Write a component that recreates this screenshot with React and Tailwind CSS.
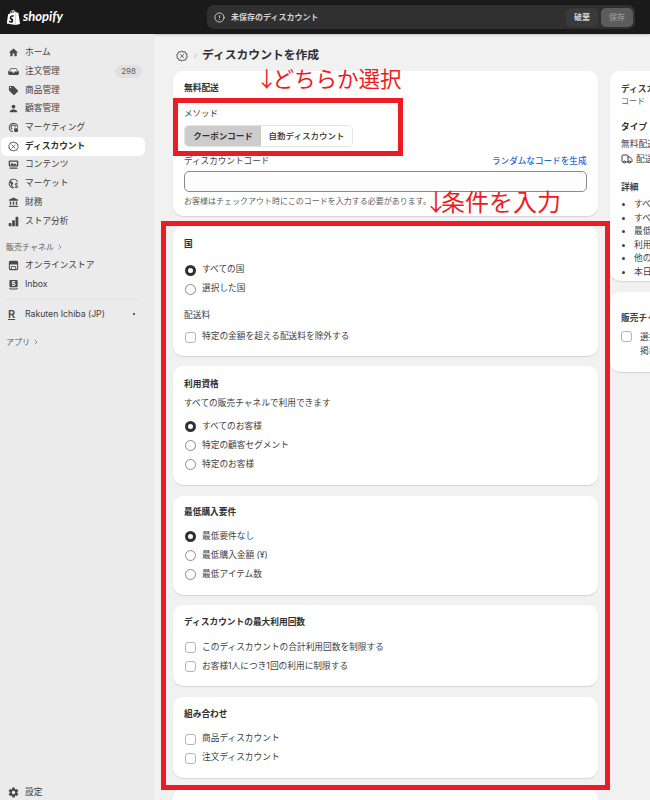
import React from 'react';
import { SiShopify } from 'react-icons/si';
import { MdHome, MdLocalOffer, MdPerson, MdAccountBalance } from 'react-icons/md';
import { BsInboxFill, BsBarChartFill } from 'react-icons/bs';
import { IoSettingsSharp } from 'react-icons/io5';
import { LuTruck, LuChevronRight, LuCircleAlert } from 'react-icons/lu';

function DiscountIcon({ className }) {
  return (
    <svg viewBox="0 0 16 16" className={className} fill="none" stroke="currentColor" strokeWidth="1.4">
      <path d="M8 1.500l1.800 1.100 2.100-.1 1 1.900 1.700 1.100-.4 2.100.7 2-1.500 1.500-.5 2.100-2.100.2L8 14.500l-1.800-1.100-2.100.1-1-1.900-1.700-1.100.4-2.100-.7-2 1.500-1.500.5-2.100 2.100-.2z" strokeLinejoin="round" />
      <path d="M5.500 5.500l5 5M10.500 5.500l-5 5" strokeWidth="1.200" />
    </svg>
  );
}

function MarketingIcon({ className }) {
  return (
    <svg viewBox="0 0 16 16" className={className} fill="none" stroke="currentColor" strokeWidth="1.500">
      <path d="M7 14a6 6 0 1 1 7-6" />
      <path d="M6.500 10.500a3.200 3.200 0 1 1 4.300-3" />
      <rect x="9" y="9" width="5.500" height="5.500" rx="1" fill="currentColor" stroke="none" />
    </svg>
  );
}

function ContentIcon({ className }) {
  return (
    <svg viewBox="0 0 16 16" className={className} fill="currentColor">
      <path fillRule="evenodd" d="M2.500 2h11A1.500 1.500 0 0 1 15 3.500v6a1.500 1.500 0 0 1-1.500 1.500h-11A1.500 1.500 0 0 1 1 9.500v-6A1.500 1.500 0 0 1 2.500 2zm.5 2v5h10V4H3z" />
      <path d="M4 8l2-2.500 2 2 2-1 2 1.500V9H4z" />
      <rect x="2" y="12.500" width="12" height="1.500" rx="0.700" />
    </svg>
  );
}

function MarketsIcon({ className }) {
  return (
    <svg viewBox="0 0 16 16" className={className} fill="none" stroke="currentColor" strokeWidth="1.500">
      <path d="M9 14.200A6.300 6.300 0 1 1 14 6" />
      <path d="M2.500 5.500c2-.5 3 .500 4 1.500s0 2-1 2.500.5 2 1 3.500" fill="currentColor" />
      <text x="9.500" y="14.500" fontSize="8" fill="currentColor" stroke="none" fontWeight="700">$</text>
    </svg>
  );
}

function StoreIcon({ className }) {
  return (
    <svg viewBox="0 0 16 16" className={className} fill="none" stroke="currentColor" strokeWidth="1.500">
      <rect x="2" y="2" width="12" height="12" rx="1.500" />
      <rect x="2" y="2" width="12" height="4.500" fill="currentColor" stroke="none" />
      <path d="M4.800 14v-4.500h6.400V14" strokeWidth="1.300" />
    </svg>
  );
}

function InboxChannelIcon({ className }) {
  return (
    <svg viewBox="0 0 16 16" className={className}>
      <rect x="2" y="1.500" width="12" height="10.500" rx="1.500" fill="#4a4a4a" />
      <text x="8" y="10" textAnchor="middle" fontSize="9" fontWeight="700" fill="#fff">S</text>
      <path d="M2 13.500c1.500 1.500 10.500 1.500 12 0" stroke="#4a4a4a" strokeWidth="1.500" fill="none" />
    </svg>
  );
}

function NavItem({ icon: Icon, label, active, badge }) {
  return (
    <div className={`h-[18.7px] flex items-center pl-[7px] pr-[3px] rounded-[6px] ${active ? 'bg-white' : ''}`}>
      <Icon className="w-[11px] h-[11px] text-[#4a4a4a] shrink-0" />
      <span className={`ml-[6px] text-[8.700px] ${active ? 'text-[#303030] font-semibold' : 'text-[#404040]'}`}>
        {label}
      </span>
      {badge && (
        <span className="ml-auto h-[13px] px-[6px] rounded-full bg-[#e0e0e0] text-[8px] leading-[13px] text-[#616161]">
          {badge}
        </span>
      )}
    </div>
  );
}

function Card({ children, className = '' }) {
  return (
    <section className={`bg-white rounded-[10px] shadow-[0_1px_1px_rgba(0,0,0,0.12)] px-[11px] ${className}`}>
      {children}
    </section>
  );
}

function Radio({ label, checked }) {
  return (
    <label className="h-[19px] flex items-center gap-[6px] pl-[1px]">
      {checked ? (
        <span className="w-[11px] h-[11px] rounded-full border-[3px] border-[#303030] bg-white" />
      ) : (
        <span className="w-[11px] h-[11px] rounded-full border border-[#8a8a8a] bg-white" />
      )}
      <span className="text-[8.700px] text-[#404040]">{label}</span>
    </label>
  );
}

function Check({ label }) {
  return (
    <label className="h-[19px] flex items-center gap-[6px] pl-[1px]">
      <span className="w-[11px] h-[11px] rounded-[3px] border border-[#b5b5b5] bg-white" />
      <span className="text-[8.700px] text-[#404040]">{label}</span>
    </label>
  );
}

function Title({ children }) {
  return <h3 className="text-[8.700px] leading-[12px] font-semibold text-[#303030]">{children}</h3>;
}

export default function App() {
  return (
    <div
      className="relative w-[650px] h-[800px] overflow-hidden bg-[#f1f1f1] flex flex-col"
      style={{ fontFamily: 'Inter, "Noto Sans CJK JP", sans-serif' }}
    >
      {/* ヘッダー */}
      <header className="h-[34px] shrink-0 bg-[#1a1a1a] flex items-center shadow-[0_1px_2px_rgba(0,0,0,0.2)]">
        <div className="w-[207px] flex items-center pl-[6px] gap-[2px] text-white">
          <SiShopify className="w-[15px] h-[17px]" />
          <span className="text-[13px] font-bold italic" style={{ fontFamily: 'Lato, sans-serif' }}>shopify</span>
        </div>
        <div className="w-[428px] h-[24px] bg-[#303030] rounded-[7px] flex items-center pl-[7px] pr-[2px]">
          <LuCircleAlert className="w-[11px] h-[11px] text-[#d4d4d4]" />
          <span className="ml-[6px] text-[8px] font-semibold text-[#d4d4d4]">未保存のディスカウント</span>
          <button className="ml-auto w-[32px] h-[19px] rounded-[5px] bg-[#3a3a3a] text-[8px] font-semibold text-[#d4d4d4]">破棄</button>
          <button className="ml-[3px] w-[32px] h-[19px] rounded-[5px] bg-[#5c5c5c] text-[8px] font-semibold text-[#8f8f8f]">保存</button>
        </div>
      </header>

      <div className="flex flex-1 min-h-0">
        {/* サイドバー */}
        <aside className="relative w-[154px] shrink-0 bg-[#ebebeb] pt-[9.500px] pl-[1px] pr-[9px]">
          <NavItem icon={MdHome} label="ホーム" />
          <NavItem icon={BsInboxFill} label="注文管理" badge="298" />
          <NavItem icon={MdLocalOffer} label="商品管理" />
          <NavItem icon={MdPerson} label="顧客管理" />
          <NavItem icon={MarketingIcon} label="マーケティング" />
          <NavItem icon={DiscountIcon} label="ディスカウント" active />
          <NavItem icon={ContentIcon} label="コンテンツ" />
          <NavItem icon={MarketsIcon} label="マーケット" />
          <NavItem icon={MdAccountBalance} label="財務" />
          <NavItem icon={BsBarChartFill} label="ストア分析" />

          <div className="mt-[7px] h-[19px] flex items-center pl-[5px] text-[8px] text-[#616161]">
            販売チャネル
            <LuChevronRight className="w-[8px] h-[8px] ml-[2px]" />
          </div>
          <NavItem icon={StoreIcon} label="オンラインストア" />
          <NavItem icon={InboxChannelIcon} label="Inbox" />
          <div className="mx-[5px] mt-[5px] mb-[5px] border-t border-[#e3e3e3]" />
          <div className="h-[19px] flex items-center pl-[7px] pr-[3px]">
            <span className="w-[11px] text-[11px] leading-[11px] font-semibold underline text-[#4a4a4a]">R</span>
            <span className="ml-[6px] text-[8.700px] text-[#404040]">Rakuten Ichiba (JP)</span>
            <span className="ml-auto mr-[7px] w-[2px] h-[2px] rounded-full bg-[#303030]" />
          </div>
          <div className="mt-[9px] h-[19px] flex items-center pl-[5px] text-[8px] text-[#616161]">
            アプリ
            <LuChevronRight className="w-[8px] h-[8px] ml-[2px]" />
          </div>

          <div className="absolute left-[1px] bottom-[-2px] w-[144px]">
            <NavItem icon={IoSettingsSharp} label="設定" />
          </div>
        </aside>

        {/* メイン */}
        <main className="flex-1 min-w-0 overflow-hidden pl-[19px]">
          <div className="h-[37px] pt-[6px] flex items-center gap-[3.500px]">
            <DiscountIcon className="w-[12px] h-[12px] text-[#616161] ml-[3px]" />
            <LuChevronRight className="w-[7px] h-[7px] text-[#8a8a8a]" />
            <h1 className="text-[11.800px] font-bold text-[#303030]">ディスカウントを作成</h1>
          </div>

          <div className="flex gap-[12.500px] items-start">
            <div className="w-[424.500px] shrink-0 flex flex-col gap-[10.500px]">
              <Card className="h-[145px] pt-[11px]">
                <Title>無料配送</Title>
                <p className="mt-[13px] text-[8.500px] leading-[12px] text-[#404040]">メソッド</p>
                <div className="mt-[6px] w-[169px] h-[22px] flex rounded-[5px] border border-[#e3e3e3] overflow-hidden">
                  <span className="w-[76px] bg-[#cccccc] text-[8.500px] font-semibold text-[#303030] flex items-center justify-center">クーポンコード</span>
                  <span className="flex-1 bg-white text-[8.500px] font-medium text-[#303030] flex items-center justify-center">自動ディスカウント</span>
                </div>
                <div className="mt-[8px] flex justify-between text-[8.600px] leading-[12px]">
                  <span className="text-[#404040]">ディスカウントコード</span>
                  <span className="font-medium text-[#1f6bd6]">ランダムなコードを生成</span>
                </div>
                <input className="mt-[4px] block w-full h-[21px] rounded-[5px] border border-[#8a8a8a] bg-[#fdfdfd]" />
                <p className="mt-[3px] text-[8px] leading-[12px] text-[#616161]">お客様はチェックアウト時にこのコードを入力する必要があります。</p>
              </Card>

              <Card className="h-[129px] pt-[11px]">
                <Title>国</Title>
                <div className="mt-[11px]">
                  <Radio label="すべての国" checked />
                  <Radio label="選択した国" />
                </div>
                <p className="mt-[10px] text-[8.700px] leading-[12px] text-[#404040]">配送料</p>
                <div className="mt-[7px]">
                  <Check label="特定の金額を超える配送料を除外する" />
                </div>
              </Card>

              <Card className="h-[119px] pt-[12px]">
                <Title>利用資格</Title>
                <p className="mt-[7px] text-[8.700px] leading-[12px] text-[#404040]">すべての販売チャネルで利用できます</p>
                <div className="mt-[8px]">
                  <Radio label="すべてのお客様" checked />
                  <Radio label="特定の顧客セグメント" />
                  <Radio label="特定のお客様" />
                </div>
              </Card>

              <Card className="h-[99px] pt-[10px]">
                <Title>最低購入要件</Title>
                <div className="mt-[9.500px]">
                  <Radio label="最低要件なし" checked />
                  <Radio label="最低購入金額 (¥)" />
                  <Radio label="最低アイテム数" />
                </div>
              </Card>

              <Card className="h-[81px] pt-[11px]">
                <Title>ディスカウントの最大利用回数</Title>
                <div className="mt-[10px]">
                  <Check label="このディスカウントの合計利用回数を制限する" />
                  <Check label="お客様1人につき1回の利用に制限する" />
                </div>
              </Card>

              <Card className="h-[81px] pt-[11px]">
                <Title>組み合わせ</Title>
                <div className="mt-[10px]">
                  <Check label="商品ディスカウント" />
                  <Check label="注文ディスカウント" />
                </div>
              </Card>

              <Card className="h-[60px]" />
            </div>

            {/* 右カラム */}
            <div className="w-[260px] shrink-0 flex flex-col gap-[11px] whitespace-nowrap">
              <Card className="h-[210px] pt-[12px] px-[9.500px] text-[8.700px] text-[#404040]">
                <p className="leading-[12px] font-semibold">ディスカウントコードなし</p>
                <p className="leading-[12px] text-[8px] text-[#616161]">コード</p>
                <p className="mt-[14px] leading-[12px] font-semibold text-[#303030]">タイプ</p>
                <p className="mt-[5px] leading-[12px]">無料配送</p>
                <p className="mt-[3px] leading-[12px] flex items-center gap-[3px]"><LuTruck className="w-[12px] h-[12px]" />配送料無料</p>
                <p className="mt-[16px] leading-[12px] font-semibold">詳細</p>
                <ul className="mt-[5px] list-disc pl-[13px] leading-[13.500px]">
                  <li>すべてのお客様向け</li>
                  <li>すべての国向け</li>
                  <li>最低購入要件なし</li>
                  <li>利用回数制限なし</li>
                  <li>他のディスカウントと併用不可</li>
                  <li>本日から有効</li>
                </ul>
              </Card>
              <Card className="h-[80px] pt-[20px] px-[9.500px] text-[8.700px] text-[#404040]">
                <p className="leading-[12px] font-semibold">販売チャネルへのアクセス</p>
                <div className="mt-[6px] flex gap-[8px]">
                  <span className="w-[11px] h-[11px] mt-[1px] rounded-[3px] border border-[#b5b5b5] bg-white" />
                  <p className="leading-[14px]">選択した販売チャネルでの<br />掲載を許可する</p>
                </div>
              </Card>
            </div>
          </div>
        </main>
      </div>

      {/* 注釈 */}
      <div className="absolute left-[173px] top-[98px] w-[230px] h-[58px] border-[5px] border-[#ed1c24]" />
      <div className="absolute left-[161px] top-[221px] w-[449px] h-[569px] border-[5px] border-[#ed1c24]" />
      <span className="absolute left-[256px] top-[62px] text-[21.500px] leading-[32px] whitespace-nowrap text-[#ed1c24]" style={{ fontFamily: '"Noto Sans CJK JP", sans-serif' }}>
        <span className="tracking-[-5px]">↓</span>どちらか選択
      </span>
      <span className="absolute left-[424px] top-[184px] text-[24px] leading-[34px] whitespace-nowrap text-[#ed1c24]" style={{ fontFamily: '"Noto Sans CJK JP", sans-serif' }}>
        <span className="tracking-[-7px]">↓</span>条件を入力
      </span>
    </div>
  );
}
